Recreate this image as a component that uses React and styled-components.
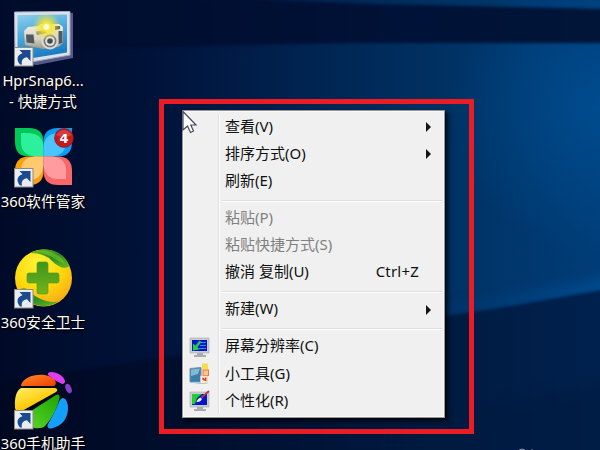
import React from 'react';
import styled, { createGlobalStyle } from 'styled-components';

const GlobalStyle = createGlobalStyle`
  body {
    margin: 0;
    overflow: hidden;
    font-family: 'Noto Sans', 'Noto Sans CJK SC', sans-serif;
  }
`;

const Desktop = styled.div`
  position: relative;
  width: 600px;
  height: 450px;
  overflow: hidden;
  background: #000b2a;
`;

const WallpaperSvg = styled.svg`
  position: absolute;
  inset: 0;
`;

// Left column of shortcuts
const ShortcutColumn = styled.div`
  position: absolute;
  top: 7px;
  left: 0;
  display: flex;
  flex-direction: column;
  width: 86px;
`;

const Shortcut = styled.div`
  display: flex;
  flex-direction: column;
  align-items: center;
  flex: none;
  gap: 3px;
  height: 121px;
`;

const ShortcutIcon = styled.svg`
  flex: none;
  width: 60px;
  height: 60px;
  overflow: visible;
`;

const ShortcutLabel = styled.div`
  color: #fff;
  font-size: 14.8px;
  line-height: 20.5px;
  text-align: center;
  white-space: pre;
  text-shadow: 1px 1px 2px #000, 0 1px 2px #000;
`;

const BadgeText = styled.text`
  font-family: 'DejaVu Sans', sans-serif;
  font-size: 13px;
  font-weight: bold;
  fill: #fff;
`;

// Red frame drawn around the open menu
const Highlight = styled.div`
  position: absolute;
  top: 99px;
  left: 159px;
  box-sizing: border-box;
  width: 315px;
  height: 335px;
  padding: 6px 18px;
  border: 5px solid #ed1c24;
`;

const Menu = styled.div`
  box-sizing: border-box;
  width: 263px;
  height: 308px;
  padding: 2.4px 1px;
  border: 1px solid #979797;
  background: linear-gradient(to right, transparent 35px, #e0e0e0 35px, #e0e0e0 36px, #fff 36px, #fff 37px, transparent 37px)
      0 3px / 100% calc(100% - 6px) no-repeat,
    #f0f0f0;
  box-shadow: inset 0 0 0 1px #f8f8f8, 2px 2px 3px rgba(0, 0, 0, 0.65), 4px 4px 5px rgba(0, 0, 0, 0.4);
`;

const MenuRow = styled.div`
  display: grid;
  grid-template-columns: 41px 1fr auto 32px;
  align-items: center;
  height: 27.25px;
  color: ${(props) => (props.$disabled ? '#808080' : '#111')};
  font-size: 15px;
  line-height: 25px;
  white-space: pre;
`;

const RowIcon = styled.svg`
  width: 20px;
  height: 22px;
  margin-left: 5px;
  overflow: visible;
`;

const RowLabel = styled.span`
  padding-bottom: 2px;
`;

const RowKeys = styled.span`
  margin-right: -8px;
  padding-bottom: 2px;
  letter-spacing: 0.2px;
`;

const Arrow = styled.span`
  justify-self: start;
  margin-left: 15px;
  border: 5px solid transparent;
  border-left-color: #151515;
  border-right: 0;
`;

const Separator = styled.div`
  height: 1px;
  margin: 4.6px 1px 3.1px 37px;
  border-top: 1px solid #dfdfdf;
  background: #fff;
`;

const Pointer = styled.svg`
  position: absolute;
  left: 182px;
  top: 110px;
`;

const Wallpaper = () => (
  <WallpaperSvg width="600" height="450" viewBox="0 0 600 450">
    <defs>
      <linearGradient id="base" x1="0" x2="1" y1="0" y2="0">
        <stop offset="0" stopColor="#000a28" />
        <stop offset="0.25" stopColor="#001239" />
        <stop offset="0.5" stopColor="#002350" />
        <stop offset="0.75" stopColor="#003264" />
        <stop offset="1" stopColor="#003d78" />
      </linearGradient>
      <radialGradient id="glow" cx="600" cy="105" r="150" gradientUnits="userSpaceOnUse">
        <stop offset="0" stopColor="#004f93" stopOpacity="0.8" />
        <stop offset="1" stopColor="#004f93" stopOpacity="0" />
      </radialGradient>
      <linearGradient id="band" x1="0" x2="1" y1="0" y2="0">
        <stop offset="0" stopColor="#000b2a" />
        <stop offset="0.6" stopColor="#001136" />
        <stop offset="1" stopColor="#001538" />
      </linearGradient>
      <linearGradient id="floor" x1="0" x2="1" y1="0" y2="0">
        <stop offset="0" stopColor="#000720" />
        <stop offset="0.3" stopColor="#000d2c" />
        <stop offset="0.75" stopColor="#001b42" />
        <stop offset="1" stopColor="#002250" />
      </linearGradient>
      <linearGradient id="beam" x1="0" x2="1" y1="0" y2="0">
        <stop offset="0" stopColor="#00438a" stopOpacity="0" />
        <stop offset="1" stopColor="#004f94" />
      </linearGradient>
      <filter id="soft" x="-10%" y="-30%" width="120%" height="160%" colorInterpolationFilters="sRGB">
        <feGaussianBlur stdDeviation="1.8" />
      </filter>
      <filter id="wide" x="-20%" y="-100%" width="140%" height="300%" colorInterpolationFilters="sRGB">
        <feGaussianBlur stdDeviation="6" />
      </filter>
    </defs>
    <rect width="600" height="450" fill="url(#base)" />
    <rect width="600" height="450" fill="url(#glow)" />
    <path d="M-10 -5L250 -1L370 4L610 9V43L350 43L-10 50Z" fill="url(#band)" filter="url(#soft)" />
    <path d="M430 308L620 276V290L430 318Z" fill="url(#beam)" filter="url(#wide)" />
    <path d="M-20 385L445 316L500 308L620 287V470H-20Z" fill="url(#floor)" filter="url(#soft)" />
    <path d="M400 425L640 372V490H400Z" fill="#001a40" opacity="0.5" filter="url(#wide)" />
    <path d="M519 450q3 -2 6 0M531 450h2" stroke="#8d9db2" fill="none" />
  </WallpaperSvg>
);

const ShortcutArrow = () => (
  <g>
    <rect x="1.5" y="40.5" width="18.5" height="18.5" fill="#e9edf2" stroke="#8f8a86" />
    <path d="M7 57.5C3 53 4 48 9.500 46.300L6.500 43H17.500V54L14 50.300C10 51 8 53.500 9 57.500Z" fill="#1b4a8e" />
  </g>
);

const CameraIcon = () => (
  <ShortcutIcon viewBox="0 0 60 60">
    <defs>
      <linearGradient id="sky" x1="0" x2="0.3" y1="0" y2="1">
        <stop offset="0" stopColor="#8fd0ee" />
        <stop offset="0.5" stopColor="#4ba8dc" />
        <stop offset="1" stopColor="#1c7fc4" />
      </linearGradient>
      <linearGradient id="camBody" x1="0" x2="0" y1="0" y2="1">
        <stop offset="0" stopColor="#f2f0df" />
        <stop offset="0.6" stopColor="#d5d3c4" />
        <stop offset="1" stopColor="#99988a" />
      </linearGradient>
      <radialGradient id="flash">
        <stop offset="0" stopColor="#fffbb0" />
        <stop offset="0.3" stopColor="#fbe62c" stopOpacity="0.95" />
        <stop offset="1" stopColor="#f1e42c" stopOpacity="0" />
      </radialGradient>
    </defs>
    <path d="M4 7L60 6V51L24 58L4 56Z" fill="#55598a" />
    <path d="M1.500 5L57 4.500V48L21 54.500L2 52Z" fill="#dce1ea" stroke="#a5abc0" />
    <path d="M4.500 8L54 7.500V45.500L20 51L4.500 49Z" fill="url(#sky)" />
    <path d="M11 24L15 20L25 19L28 17H46L50 20V36L45 40L30 42L12 38Z" fill="url(#camBody)" />
    <path d="M13 27.500h7.500l1 9l-8 -1zM45.500 24h4v12l-4 1z" fill="#54575b" />
    <path d="M23 24.500L32 23L34 26L24 28Z" fill="#85877e" />
    <path d="M42 19h5v3l-5 1z" fill="#55585a" />
    <circle cx="37" cy="34" r="8.500" fill="#dddbd0" />
    <circle cx="37" cy="34" r="6.500" fill="#77797d" />
    <circle cx="37" cy="34" r="4.800" fill="#e2e4e6" />
    <circle cx="37" cy="34" r="2.800" fill="#43484f" />
    <circle cx="33.500" cy="19.500" r="14" fill="url(#flash)" />
    <circle cx="33.500" cy="20" r="3" fill="#fffad0" />
    <ShortcutArrow />
  </ShortcutIcon>
);

const PetalsIcon = () => (
  <ShortcutIcon viewBox="0 0 60 60">
    <path d="M2 0H16Q30.500 0 30.500 14V28.500H16Q2 28.500 2 14Z" fill="#00c957" />
    <path d="M8 5H16Q30.500 6 30.500 20V28.500H22Q8 27 8 14Z" fill="#2cf09c" />
    <path d="M59 0H45Q30.500 0 30.500 14V28.500H45Q59 28.500 59 14Z" fill="#0a9cf9" />
    <path d="M53 5H45Q30.500 6 30.500 20V28.500H39Q53 27 53 14Z" fill="#4ac5ff" />
    <path d="M2 57V43Q2 28.500 16 28.500H30.500V43Q30.500 57 16 57Z" fill="#f9a010" />
    <path d="M8 52V43Q8 29.500 22 28.500H30.500V37Q29 52 16 52Z" fill="#ffc96d" />
    <path d="M59 57V43Q59 28.500 45 28.500H30.500V43Q30.500 57 45 57Z" fill="#fa6769" />
    <path d="M53 51V43Q53 29.500 39 28.500H30.500V37Q32 51 45 51Z" fill="#ff9ca0" />
    <circle cx="51" cy="10" r="9.500" fill="#c4191f" stroke="#8c1014" strokeWidth="0.6" />
    <path d="M43 7Q51 -3 59 7Q51 11 43 7Z" fill="#e05357" opacity="0.6" />
    <BadgeText x="51" y="14.500" textAnchor="middle">4</BadgeText>
    <ShortcutArrow />
  </ShortcutIcon>
);

const GuardIcon = () => (
  <ShortcutIcon viewBox="0 0 60 60">
    <defs>
      <radialGradient id="gold" cx="0.4" cy="0.25" r="0.8">
        <stop offset="0" stopColor="#fff238" />
        <stop offset="0.55" stopColor="#ffd90a" />
        <stop offset="1" stopColor="#f7a51b" />
      </radialGradient>
      <linearGradient id="leaf" x1="0" x2="1" y1="0" y2="1">
        <stop offset="0" stopColor="#75bd18" />
        <stop offset="0.5" stopColor="#278c26" />
        <stop offset="1" stopColor="#6cb91c" />
      </linearGradient>
      <linearGradient id="plus" x1="0" x2="0" y1="0" y2="1">
        <stop offset="0" stopColor="#3e941d" />
        <stop offset="1" stopColor="#73b31b" />
      </linearGradient>
    </defs>
    <circle cx="30.500" cy="29" r="28.500" fill="url(#gold)" />
    <path d="M17 4C29 -2.500 50 -1 56.500 17C50 22 43 16 36 9C29 5 23 4 17 4Z" fill="url(#leaf)" />
    <path d="M24 2.500C36 0 49 6 52 15C44 12 37 5 24 2.500Z" fill="#8fd12c" opacity="0.45" />
    <path d="M6 42C9 37 14 39 18 44C27 51 38 55 46 52C34 61 14 58 6 42Z" fill="url(#leaf)" />
    <path
      d="M26 13H33Q35 13 35 15V24H44Q46 24 46 26V32Q46 34 44 34H35V43Q35 45 33 45H26Q24 45 24 43V34H16Q14 34 14 32V26Q14 24 16 24H24V15Q24 13 26 13Z"
      fill="url(#plus)"
      stroke="#5a9b19"
      strokeWidth="0.7"
    />
    <ShortcutArrow />
  </ShortcutIcon>
);

const PhoneHelperIcon = () => (
  <ShortcutIcon viewBox="0 0 60 60">
    <defs>
      <linearGradient id="orange" x1="0" x2="1" y1="0" y2="1">
        <stop offset="0" stopColor="#ff8b24" />
        <stop offset="1" stopColor="#f03c00" />
      </linearGradient>
      <linearGradient id="yellow" x1="0" x2="0.7" y1="0" y2="1">
        <stop offset="0" stopColor="#fff06a" />
        <stop offset="0.6" stopColor="#ffce10" />
        <stop offset="1" stopColor="#f7a300" />
      </linearGradient>
      <linearGradient id="green" x1="0" x2="0.8" y1="1" y2="0">
        <stop offset="0" stopColor="#5bd729" />
        <stop offset="1" stopColor="#20a806" />
      </linearGradient>
    </defs>
    <path d="M8 15C11 4 34 1 42 10Q44 14 41 16H11Q8 17 8 15Z" fill="url(#orange)" />
    <path d="M35 3C39 0 50 4 52 11Q52 14 49 14Q42 11 35 5Z" fill="#dd3ef0" />
    <ellipse cx="55.500" cy="18.500" rx="2.800" ry="5" transform="rotate(-23 55.500 18.500)" fill="#8a3ec8" />
    <path d="M8 18H42Q46 19 43 22L9 41Q3 43 2 38Q1 22 8 18Z" fill="url(#yellow)" />
    <path d="M18 41L43 25Q47 23 46.500 28Q43 44 32 56Q29 59 21 58Q14 55 14 47Z" fill="url(#green)" />
    <path d="M50 28Q55 29 55 39Q54 54 40 58Q34 60 34.500 55Q42 42 46 32Q48 28 50 28Z" fill="#149ffa" />
    <ShortcutArrow />
  </ShortcutIcon>
);

const Monitor = ({ children }) => (
  <RowIcon viewBox="0 0 20 22">
    <path d="M1 2H20V17H1Z" fill="#c9cdd2" stroke="#a4a8ad" strokeWidth="0.6" />
    <path d="M3 4H18V15H3Z" fill="#0815c4" />
    <path d="M8 17H14V19H17V21H5V19H8Z" fill="#a9abad" />
    {children}
  </RowIcon>
);

const ResolutionIcon = () => (
  <Monitor>
    <path d="M12 6.500H17M11 9.500H17M10 12.500H17" stroke="#2f8df0" />
    <path d="M4 14.500V7.500L6.500 9.500L10.500 4.500L12.500 6L8.500 11L10.500 13.500Z" fill="#20cf4c" />
  </Monitor>
);

const GadgetIcon = () => (
  <RowIcon viewBox="0 0 20 22">
    <path d="M1 5.500L12 4.500V19H1Z" fill="#3a7fab" stroke="#7295ad" />
    <path d="M2 6.500L11 5.500L9 11L2 13Z" fill="#84b9d4" />
    <path d="M2 19.500H18V21H10Z" fill="#9dd1ea" />
    <rect x="13" y="0.500" width="6" height="6" fill="#f7dd4e" />
    <rect x="14" y="7" width="5.500" height="5.500" fill="#ffc493" stroke="#ec7b35" />
    <rect x="11.500" y="13" width="7" height="7" fill="#fff6e8" stroke="#e6c7a8" strokeWidth="0.6" />
    <path d="M13 14.500L15 15L16 16V14.500H17.500V18.500L15 17.500L13.500 17Z" fill="#d94817" />
  </RowIcon>
);

const PersonalizeIcon = () => (
  <Monitor>
    <path d="M3 4H13L8 8L6 14H3Z" fill="#20ce30" />
    <path d="M7.500 12Q8 9 11.500 7.500L13 9Q11.500 12.500 7.500 12Z" fill="#eee" />
    <path d="M13 7L19.500 1.500" stroke="#b53850" strokeWidth="1.8" strokeLinecap="round" />
  </Monitor>
);

const shortcuts = [
  { label: 'HprSnap6...\n- 快捷方式', Icon: CameraIcon },
  { label: '360软件管家', Icon: PetalsIcon },
  { label: '360安全卫士', Icon: GuardIcon },
  { label: '360手机助手', Icon: PhoneHelperIcon },
];

const menuGroups = [
  [
    { label: '查看(V)', submenu: true },
    { label: '排序方式(O)', submenu: true },
    { label: '刷新(E)' },
  ],
  [
    { label: '粘贴(P)', disabled: true },
    { label: '粘贴快捷方式(S)', disabled: true },
    { label: '撤消 复制(U)', keys: 'Ctrl+Z' },
  ],
  [{ label: '新建(W)', submenu: true }],
  [
    { label: '屏幕分辨率(C)', Icon: ResolutionIcon },
    { label: '小工具(G)', Icon: GadgetIcon },
    { label: '个性化(R)', Icon: PersonalizeIcon },
  ],
];

const App = () => {
  return (
    <>
      <GlobalStyle />
      <Desktop>
        <Wallpaper />
        <ShortcutColumn>
          {shortcuts.map(({ label, Icon }) => (
            <Shortcut key={label}>
              <Icon />
              <ShortcutLabel>{label}</ShortcutLabel>
            </Shortcut>
          ))}
        </ShortcutColumn>
        <Highlight>
          <Menu>
            {menuGroups.map((group, i) => (
              <React.Fragment key={i}>
                {i > 0 && <Separator />}
                {group.map(({ label, submenu, disabled, keys, Icon }) => (
                  <MenuRow key={label} $disabled={disabled}>
                    {Icon ? <Icon /> : <span />}
                    <RowLabel>{label}</RowLabel>
                    <RowKeys>{keys}</RowKeys>
                    {submenu && <Arrow />}
                  </MenuRow>
                ))}
              </React.Fragment>
            ))}
          </Menu>
        </Highlight>
        {/* Mouse pointer */}
        <Pointer width="16" height="24" viewBox="0 0 16 24">
          <path
            d="M1 1.500V20L5.500 16L8.500 22.500L11.500 21L8.800 15H14Z"
            fill="#fff"
            stroke="#44485c"
            strokeWidth="1.2"
          />
        </Pointer>
      </Desktop>
    </>
  );
};

export default App;
